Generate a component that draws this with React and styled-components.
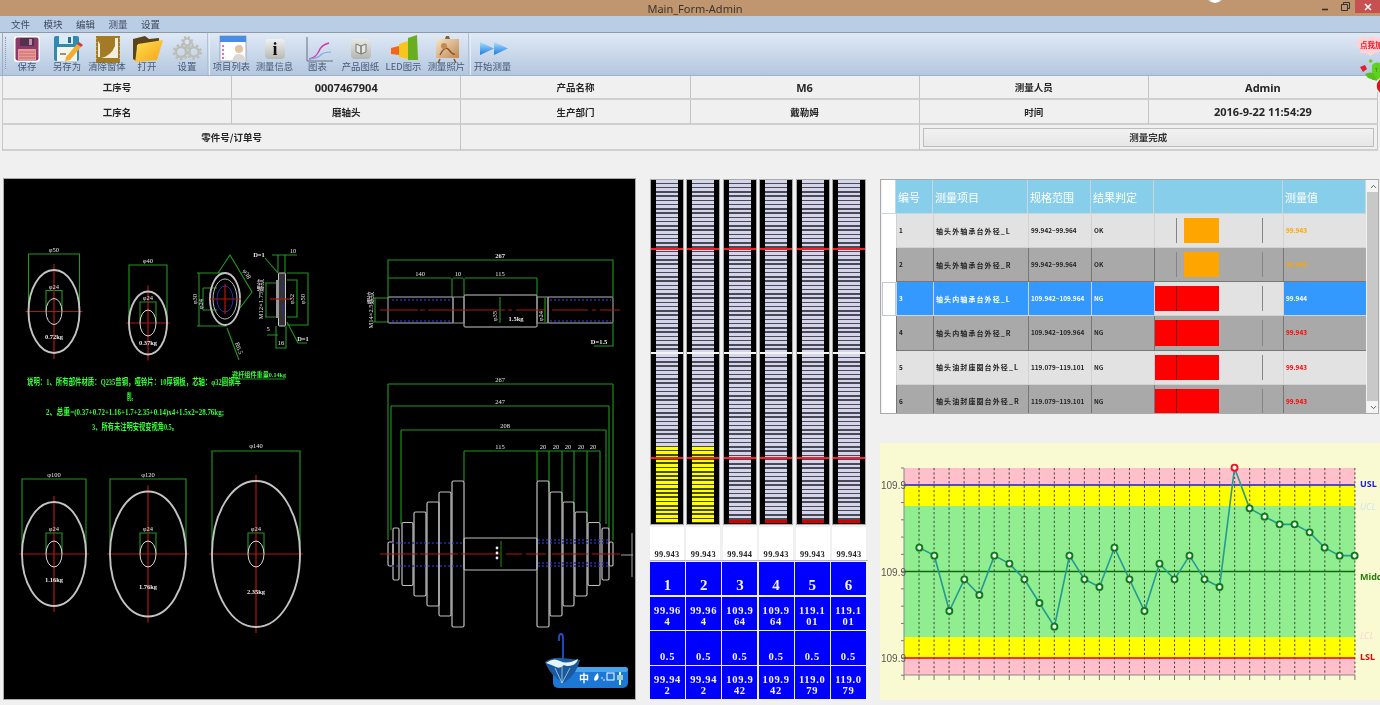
import React from "react";
import styled, { createGlobalStyle } from "styled-components";
import { ChevronUp, ChevronDown } from "lucide-react";

const Global = createGlobalStyle`
  html, body { margin: 0; padding: 0; background: #f0f0f0; overflow: hidden; }
  * { box-sizing: border-box; }
`;

const CJK = `"Noto Sans CJK SC", "Noto Sans", sans-serif`;

const Page = styled.div`
  position: relative;
  width: 1380px;
  height: 705px;
  overflow: hidden;
  display: flex;
  flex-direction: column;
  background: #f0f0f0;
  font-family: ${CJK};
  filter: blur(0.45px);
`;

/* ---------- window chrome ---------- */
const TitleBar = styled.div`
  position: relative;
  height: 16px;
  flex: none;
  background: #c09671;
  display: grid;
  grid-template-columns: 1fr auto 1fr;
  align-items: center;
`;
const TitleText = styled.div`
  grid-column: 2;
  padding-left: 10px;
  font: 11px "Noto Sans", sans-serif;
  color: #3a332c;
`;
const WindowButtons = styled.div`
  grid-column: 3;
  justify-self: end;
  align-self: start;
  display: flex;
`;
const WindowButton = styled.div`
  width: ${(p) => (p.$close ? 25 : 20)}px;
  height: 13px;
  background: ${(p) => (p.$close ? "#c75050" : "transparent")};
  display: flex;
  align-items: center;
  justify-content: center;
`;
const TitleOrb = styled.div`
  position: absolute;
  left: 1205px;
  top: -17px;
  width: 20px;
  height: 20px;
  border-radius: 50%;
  background: radial-gradient(circle at 50% 85%, #ffffff 0 15%, #3a9ad8 60%, #23608c 100%);
`;
const MenuBar = styled.div`
  height: 17px;
  flex: none;
  background: #b9cde5;
  border-bottom: 1px solid #8f99a6;
  display: flex;
  align-items: center;
  gap: 13.5px;
  padding-left: 11px;
`;
const MenuItem = styled.span`
  font-size: 9.5px;
  line-height: 16px;
  color: #3d4c60;
`;
const Toolbar = styled.div`
  height: 43px;
  flex: none;
  background: linear-gradient(to bottom, #dfe9f6, #b4c7de);
  border-bottom: 1px solid #a0b2c9;
  padding-left: 2px;
  display: flex;
`;
const Gripper = styled.div`
  width: 5px;
  height: 100%;
  border-left: 1px solid #a3adb9;
  margin-right: 0;
  position: relative;
  &::after {
    content: "";
    position: absolute;
    left: 2px;
    top: 4px;
    bottom: 6px;
    border-left: 1px dotted #8298b4;
  }
`;
const ToolGroup = styled.div`
  display: flex;
  height: 100%;
`;
const ToolSeparator = styled.div`
  width: 3px;
  height: 100%;
  border-left: 1px solid #b2c2d6;
  border-right: 1px solid #e4edf7;
`;
const Tool = styled.div`
  width: ${(p) => p.$w}px;
  height: 100%;
  padding-top: 2px;
  display: flex;
  flex-direction: column;
  align-items: center;
`;
const ToolIcon = styled.svg`
  width: 32px;
  height: 28px;
  display: block;
  flex: none;
`;
const ToolLabel = styled.span`
  margin-top: -3px;
  font-size: 9.4px;
  line-height: 12px;
  white-space: nowrap;
  color: #435a78;
`;
const Mascot = styled.svg`
  position: absolute;
  right: 0;
  top: 34px;
  width: 30px;
  height: 68px;
`;
const MascotText = styled.text`
  font: bold 7.5px ${CJK};
  fill: #e8202c;
`;

/* ---------- info grid ---------- */
const InfoGrid = styled.div`
  flex: none;
  height: 75px;
  margin: 0 2px;
  display: grid;
  grid-template-columns: repeat(6, 1fr);
  grid-template-rows: 24px 25px 26px;
  border-left: 1px solid #c8c8c8;
`;
const InfoCell = styled.div`
  grid-column: span ${(p) => p.$span || 1};
  border-right: 1px solid #c4c4c4;
  border-bottom: 2px solid #cfcfcf;
  display: flex;
  align-items: center;
  justify-content: center;
  font: bold ${(p) => (p.$latin ? "11px" : "9.5px")} ${(p) => (p.$latin ? `"Noto Sans", ${CJK}` : CJK)};
  color: #262626;
  padding: 2px;
`;
const DoneButton = styled.div`
  width: 100%;
  height: 19px;
  margin: 0 1px;
  border: 1px solid #bdbdbd;
  background: linear-gradient(to bottom, #f2f2f2, #e6e6e6);
  display: flex;
  align-items: center;
  justify-content: center;
  font: bold 9.5px ${CJK};
  color: #333;
`;

/* ---------- content ---------- */
const Content = styled.div`
  display: flex;
  margin-top: 27px;
  align-items: flex-start;
`;
const DrawingFrame = styled.div`
  width: 633px;
  height: 522px;
  margin-left: 3px;
  flex: none;
  background: #000;
  border: 1px solid #a8a8a8;
`;
const DrawingSvg = styled.svg`
  display: block;
  width: 631px;
  height: 520px;
  text {
    font-family: "Liberation Serif", ${CJK};
    font-size: 6.5px;
    fill: #e8e8e8;
    text-anchor: middle;
  }
`;
const NoteText = styled.text`
  && {
    font: bold 8.6px "Liberation Serif", ${CJK};
    fill: #39ff3a;
    text-anchor: start;
  }
`;
const SmallNoteText = styled(NoteText)`
  && {
    font-size: 6.4px;
  }
`;
const ImeGlyph = styled.text`
  && {
    font: bold 10px ${CJK};
    fill: #fff;
  }
`;

/* gauges */
const GaugeColumn = styled.div`
  width: 218px;
  margin: 1px 0 0 14px;
  flex: none;
  display: flex;
  flex-direction: column;
`;
const GaugeRow = styled.div`
  display: grid;
  grid-template-columns: repeat(6, 34px);
  column-gap: 2.4px;
  height: 346px;
`;
const Gauge = styled.div`
  position: relative;
  background: #000;
  border: 1px solid #a9a9a9;
  display: flex;
  justify-content: center;
  padding-bottom: 1px;
`;
const GaugeScale = styled.div`
  position: relative;
  width: 22px;
  background: repeating-linear-gradient(to bottom, #d4d4ea 0 2.6px, #4a4a56 2.6px 4.25px);
`;
const GaugeFill = styled.div`
  position: absolute;
  left: 0;
  right: 0;
  bottom: 0;
  height: ${(p) => p.$h}px;
  background: ${(p) =>
    p.$red
      ? "#d40000"
      : "repeating-linear-gradient(to bottom, #ffff00 0 2.6px, #4a4a0a 2.6px 4.25px)"};
`;
const GaugeLine = styled.div`
  position: absolute;
  left: 0;
  right: 0;
  top: ${(p) => p.$top}px;
  height: 2px;
  background: ${(p) => p.$color};
`;
const ValueRow = styled.div`
  display: grid;
  grid-template-columns: repeat(6, 34px);
  column-gap: 2.4px;
  height: 36px;
  padding-top: 2px;
  border-bottom: 1px solid #b0b0e8;
`;
const ValueCell = styled.div`
  background: #fff;
  display: flex;
  align-items: flex-end;
  justify-content: center;
  padding-bottom: 1px;
  font: bold 8.4px/9px "Liberation Serif", serif;
  letter-spacing: 0.35px;
  color: #222;
`;
const SpecGrid = styled.div`
  display: grid;
  grid-template-columns: repeat(6, 35px);
  grid-auto-rows: 33.4px;
  gap: 1.2px;
  margin-top: 1px;
`;
const SpecCell = styled.div`
  background: #0000ff;
  color: #f4f4ff;
  display: flex;
  align-items: flex-end;
  justify-content: center;
  text-align: center;
  padding: 0 3px ${(p) => (p.$big ? 1 : 3)}px;
  word-break: break-all;
  font: bold ${(p) => (p.$big ? "15px/18px" : "10.5px/11px")} "Liberation Serif", serif;
  letter-spacing: ${(p) => (p.$big ? 0 : 0.7)}px;
`;

/* right column */
const RightColumn = styled.div`
  width: 500px;
  margin: 1px 0 0 12px;
  flex: none;
  display: flex;
  flex-direction: column;
  gap: 29px;
`;
const TableFrame = styled.div`
  width: 499px;
  height: 235px;
  border: 1px solid #aaa;
  padding-left: 1px;
  display: flex;
  overflow: hidden;
  background: #f0f0f0;
`;
const TableBody = styled.div`
  width: 484px;
  flex: none;
  overflow: hidden;
`;
const columns = "14px 37px 95px 63px 63px 129px 83px";
const HeadRow = styled.div`
  display: grid;
  grid-template-columns: ${columns};
  height: 34px;
`;
const HeadCell = styled.div`
  background: ${(p) => (p.$blank ? "#fff" : "#87ceeb")};
  border-right: 1px solid #c9d6dc;
  border-bottom: 1px solid #c9d6dc;
  color: #fff;
  font-size: 11px;
  display: flex;
  align-items: center;
  padding-left: 2px;
`;
const toneBg = { light: "#e2e2e2", dark: "#a9a9a9", selected: "#3399ff" };
const Row = styled.div`
  display: grid;
  grid-template-columns: ${columns};
  height: 34.15px;
`;
const RowHead = styled.div`
  background: #fff;
  border: ${(p) => (p.$tone === "selected" ? "1px solid #c4c8d0" : "none")};
`;
const Cell = styled.div`
  background: ${(p) => toneBg[p.$tone]};
  border-left: 1px solid ${(p) => (p.$tone === "dark" ? "#777" : "#d2d2d2")};
  border-bottom: 1px solid ${(p) => (p.$tone === "dark" ? "#777" : "#d2d2d2")};
  color: ${(p) => p.$color || (p.$tone === "selected" ? "#fff" : "#222")};
  display: flex;
  align-items: center;
  padding-left: 2px;
  white-space: nowrap;
  font: bold ${(p) => (p.$name ? "7px" : "6.4px")} ${CJK};
  letter-spacing: ${(p) => (p.$name ? 1.1 : 0)}px;
`;
const BarCell = styled.div`
  position: relative;
  background: ${(p) => (p.$tone === "dark" ? "#a9a9a9" : "#e2e2e2")};
  border-left: 1px solid ${(p) => (p.$tone === "dark" ? "#777" : "#d2d2d2")};
  border-bottom: 1px solid ${(p) => (p.$tone === "dark" ? "#777" : "#d2d2d2")};
`;
const BarMark = styled.div`
  position: absolute;
  top: 4px;
  bottom: 4px;
  left: ${(p) => p.$x}px;
  width: 1px;
  background: ${(p) => (p.$over ? "#8a0000" : "#858585")};
  z-index: 1;
`;
const BarFill = styled.div`
  position: absolute;
  top: 4px;
  bottom: 4px;
  left: ${(p) => p.$x}px;
  width: ${(p) => p.$w}px;
  background: ${(p) => p.$color};
`;
const Scrollbar = styled.div`
  width: 12px;
  margin-left: 1px;
  flex: none;
  background: #c8c8c8;
  display: flex;
  flex-direction: column;
  justify-content: space-between;
`;
const ScrollButton = styled.div`
  height: 12px;
  background: #f4f4f4;
  display: flex;
  align-items: center;
  justify-content: center;
  color: #555;
`;
const ChartPanel = styled.div`
  width: 500px;
  height: 257px;
  background: #fafad2;
  overflow: hidden;
`;
const ChartSvg = styled.svg`
  display: block;
  width: 500px;
  height: 257px;
`;
const AxisText = styled.text`
  font: 10px "Liberation Sans", sans-serif;
  fill: #555;
`;
const LimitText = styled.text`
  font: bold 9px "Noto Sans", sans-serif;
  font-style: ${(p) => (p.$soft ? "italic" : "normal")};
  font-weight: ${(p) => (p.$soft ? 400 : 700)};
  fill: ${(p) => p.$color};
`;

/* ---------- icons ---------- */
const icons = {
  save: (
    <>
      <rect x="3" y="1" width="26" height="26" rx="3" fill="#fff" />
      <rect x="4.5" y="2.5" width="23" height="23" rx="2" fill="#8c3a6c" />
      <rect x="9" y="3" width="14" height="8" fill="#54324e" />
      <rect x="18" y="4" width="3" height="6" fill="#c090b0" />
      <rect x="7" y="14" width="18" height="11" fill="#ea9a94" />
      <path d="M8 17h16M8 20h16M8 23h16" stroke="#c46a70" />
    </>
  ),
  saveAs: (
    <>
      <rect x="3" y="1" width="25" height="25" rx="2" fill="#2f8bb0" />
      <rect x="8" y="1" width="14" height="8" fill="#d8ecf4" />
      <rect x="17" y="2" width="3" height="6" fill="#2f6a88" />
      <rect x="6" y="12" width="20" height="14" fill="#f4f4ea" />
      <polygon points="15,22 26,9 30,12 19,25 14,26" fill="#f4ac30" />
      <polygon points="26,9 28,7 32,10 30,12" fill="#d8383a" />
      <path d="M9 19h6" stroke="#333" strokeWidth="1" />
    </>
  ),
  clear: (
    <>
      <rect x="5" y="1" width="24" height="27" fill="#a37b25" />
      <path d="M24 3h3v20H10q10-2 14-12z" fill="#f4eee0" />
      <path d="M7 6v16h2V9z" fill="#f4eee0" />
      <path d="M5 3v24M29 3v24" stroke="#f0e4c0" strokeDasharray="1 3" />
    </>
  ),
  open: (
    <>
      <defs>
        <linearGradient id="folder" x1="0" y1="0" x2="1" y2="1">
          <stop offset="0" stopColor="#ffe050" />
          <stop offset="1" stopColor="#f6a414" />
        </linearGradient>
      </defs>
      <polygon points="2,4 14,1 18,4 28,3 28,7 6,10 5,26 2,24" fill="#5a4418" />
      <polygon points="7,9 32,5 26,25 4,27" fill="url(#folder)" />
    </>
  ),
  gears: (
    <>
      <g fill="none" stroke="#bdbdb8">
        <circle cx="10" cy="17" r="5" strokeWidth="2.4" />
        <circle cx="10" cy="17" r="7" strokeWidth="2.6" strokeDasharray="2.5 2.2" />
        <circle cx="23" cy="17" r="4.6" strokeWidth="2.4" />
        <circle cx="23" cy="17" r="6.6" strokeWidth="2.6" strokeDasharray="2.5 2.2" />
        <circle cx="16" cy="7" r="3.4" strokeWidth="2" />
        <circle cx="16" cy="7" r="5" strokeWidth="2.2" strokeDasharray="2 2" />
      </g>
    </>
  ),
  list: (
    <>
      <rect x="4" y="1" width="26" height="25" fill="#fff" stroke="#9aa8c0" />
      <rect x="4" y="1" width="26" height="6" fill="#4a8ce4" />
      <path d="M6 11h2M6 15h2M6 19h2M6 23h2" stroke="#e040b0" strokeWidth="1.6" />
      <circle cx="23" cy="14" r="4" fill="#e4c4a0" />
      <path d="M16 27q1-8 7-8t7 8z" fill="#d8d8d8" />
    </>
  ),
  info: (
    <>
      <defs>
        <linearGradient id="tile" x1="0" y1="0" x2="0" y2="1">
          <stop offset="0" stopColor="#f0f0ee" />
          <stop offset="1" stopColor="#b8b8b4" />
        </linearGradient>
      </defs>
      <rect x="6" y="4" width="20" height="20" rx="4" fill="url(#tile)" />
      <text x="16" y="20" textAnchor="middle" fontFamily="Liberation Serif, serif" fontWeight="bold" fontSize="18" fill="#111">i</text>
    </>
  ),
  chart: (
    <>
      <path d="M5 2v24h26" fill="none" stroke="#66707c" />
      <path d="M7 24c6-1 8-4 10-8 2-5 6-7 10-8" fill="none" stroke="#d43aa8" strokeWidth="1.5" />
      <path d="M7 24c6 0 10-2 13-5 3-2 6-2 9-2" fill="none" stroke="#80a8e8" strokeWidth="1.2" />
    </>
  ),
  drawing: (
    <>
      <defs>
        <linearGradient id="tile2" x1="0" y1="0" x2="0" y2="1">
          <stop offset="0" stopColor="#e8e8e4" />
          <stop offset="1" stopColor="#b4b4b0" />
        </linearGradient>
      </defs>
      <rect x="6" y="4" width="20" height="20" rx="4" fill="url(#tile2)" />
      <path d="M11 9l5 2v8l-5-2zM16 11l5-2v8l-5 2z" fill="#e6e6e2" stroke="#777" />
    </>
  ),
  led: (
    <>
      <polygon points="3,13 11,11 11,20 3,19" fill="#f0661e" />
      <polygon points="11,9 20,6 20,24 11,22" fill="#f8c420" />
      <polygon points="20,3 29,0 30,25 20,25" fill="#68ae1e" />
    </>
  ),
  photo: (
    <>
      <defs>
        <linearGradient id="paper" x1="0" y1="0" x2="1" y2="1">
          <stop offset="0" stopColor="#f4e4c8" />
          <stop offset="1" stopColor="#c08850" />
        </linearGradient>
      </defs>
      <path d="M15 1h3l1 3h-5z" fill="#8a6038" />
      <path d="M9 24l-2 4M23 24l2 4" stroke="#8a5a30" strokeWidth="1.6" />
      <rect x="5" y="4" width="23" height="19" fill="url(#paper)" />
      <path d="M9 20q5-10 9-5t6 4" fill="none" stroke="#8a5020" strokeWidth="1.4" />
      <circle cx="13" cy="11" r="3" fill="#c48a50" />
    </>
  ),
  play: (
    <>
      <defs>
        <linearGradient id="arrow" x1="0" y1="0" x2="0" y2="1">
          <stop offset="0" stopColor="#a8e0fa" />
          <stop offset="1" stopColor="#1c7ce0" />
        </linearGradient>
      </defs>
      <polygon points="3,7 17,13.5 3,20" fill="url(#arrow)" />
      <polygon points="17,7 31,13.5 17,20" fill="url(#arrow)" />
    </>
  ),
};

const toolGroups = [
  { w: 40, items: [["save", "保存"], ["saveAs", "另存为"], ["clear", "清除窗体"], ["open", "打开"], ["gears", "设置"]] },
  { w: 43, items: [["list", "项目列表"], ["info", "测量信息"], ["chart", "图表"], ["drawing", "产品图纸"], ["led", "LED图示"], ["photo", "测量照片"]] },
  { w: 43, items: [["play", "开始测量"]] },
];

/* ---------- CAD drawing (page coordinates in the viewBox) ---------- */
const Green = ({ d }) => <path d={d} fill="none" stroke="#1f9a1f" strokeWidth="1.1" />;
const Red = ({ d }) => <path d={d} fill="none" stroke="#b01616" strokeWidth="1.2" />;
const Blue = ({ d }) => <path d={d} fill="none" stroke="#2a2aa8" strokeWidth="1.5" strokeDasharray="2 2" />;
const Steel = (props) => <ellipse fill="none" stroke="#c4c4c4" strokeWidth="1.9" {...props} />;
const Plate = ({ x1, x2, h, cy = 554 }) => (
  <rect x={x1} y={cy - h} width={x2 - x1} height={h * 2} rx="1.5" fill="none" stroke="#c0c0c0" strokeWidth="1.2" />
);
const VText = ({ x, y, children }) => (
  <text x={x} y={y} transform={`rotate(-90 ${x} ${y})`}>{children}</text>
);
const Disc = ({ cx, cy, rx, ry, topY, label, weight, weightY, labelY, hole = 24 }) => (
  <g>
    <Green d={`M${cx - rx} ${cy}V${topY}H${cx + rx}V${cy}`} />
    <Green d={`M${cx - 8} ${cy}V${cy - 21}H${cx + 8}V${cy}`} />
    <Red d={`M${cx - rx - 3} ${cy}H${cx + rx + 3}M${cx} ${cy - ry - 6}V${cy + ry + 6}`} />
    <Steel cx={cx} cy={cy} rx={rx} ry={ry} />
    <ellipse cx={cx} cy={cy} rx="8" ry="13" fill="none" stroke="#d8d8d8" />
    <text x={cx} y={labelY}>{label}</text>
    <text x={cx} y={cy - 23}>{`φ${hole}`}</text>
    <text x={cx} y={weightY} fontWeight="bold">{weight}</text>
  </g>
);

const Drawing = () => (
  <DrawingSvg viewBox="4 179 631 520">
    <Disc cx={54} cy={311.5} rx={25.5} ry={41.5} topY={254} label="φ50" labelY={252} weight="0.72kg" weightY={339} />
    <Disc cx={148} cy={323} rx={19} ry={31.5} topY={265} label="φ40" labelY={263} weight="0.37kg" weightY={345} />

    {/* flange, front */}
    <Green d="M197 273H227M197 326H227M199 273V326M203 288H217M203 310H217M203 288V310M218 273L230 255L252 292L240 308M227 328L239 360" />
    <Steel cx={225} cy={299} rx={15} ry={26} />
    <ellipse cx={225} cy={299} rx={12} ry={20} fill="none" stroke="#bbb" />
    <ellipse cx={225} cy={299} rx={8} ry={13} fill="none" stroke="#2a2ab0" />
    <Red d="M210 299H241M225 284V314" />
    <VText x={197} y={299}>φ30</VText>
    <VText x={203} y={304}>φ24</VText>
    <text x={245} y={275} transform="rotate(60 245 275)">φ38</text>
    <text x={237} y={349} transform="rotate(68 237 349)">R6.5</text>

    {/* flange, side */}
    <Green d="M272 255H297M278 255V273M285 255V273M265 258L278 273M287 280H297V317H287M287 273H308V325H287M265 283H277M265 317H277M266 283V317M276 326V348H286V326M267 335H278M287 322L298 343H307" />
    <rect x="278.5" y="273" width="7" height="53" rx="1" fill="#333" stroke="#c8c8c8" />
    <rect x="276" y="280" width="3" height="38" fill="#999" />
    <path d="M283 281V292M283 305V316" stroke="#2a2ab0" strokeWidth="1.4" strokeDasharray="2 2" />
    <Red d="M270 299H291" />
    <text x={293} y={253}>10</text>
    <text x={259} y={257} fontWeight="bold">D=1</text>
    <text x={303} y={341} fontWeight="bold">D=1</text>
    <VText x={263} y={299}>M12×1.75螺纹</VText>
    <VText x={294} y={299}>φ32</VText>
    <VText x={305} y={299}>φ50</VText>
    <text x={268} y={331}>5</text>
    <text x={281} y={345}>16</text>

    {/* notes */}
    <NoteText x={27} y={385} textLength={214} lengthAdjust="spacingAndGlyphs">说明：1、所有部件材质：Q235普钢，哑铃片：10厚钢板，芯轴：φ32圆钢车</NoteText>
    <NoteText x={127} y={400} textLength={9} lengthAdjust="spacingAndGlyphs">削。</NoteText>
    <NoteText x={46} y={415} textLength={178} lengthAdjust="spacingAndGlyphs">2、总重=(0.37+0.72+1.16+1.7+2.35+0.14)x4+1.5x2=28.76kg;</NoteText>
    <NoteText x={92} y={430} textLength={86} lengthAdjust="spacingAndGlyphs">3、所有未注明安视变视角0.5。</NoteText>
    <SmallNoteText x={232} y={377} textLength={54} lengthAdjust="spacingAndGlyphs">避杆组件重量0.14kg</SmallNoteText>
    <Green d="M232 379H285" />

    {/* shaft */}
    <Green d="M388 297V260H613V297M388 278H451M453 278H463M465 278H537M452 278V297M464 278V295M537 278V295M373 298H388M373 322H388M375 298V322M500 297V323M545 298V322" />
    <rect x="388" y="297" width="65" height="26" rx="1" fill="none" stroke="#b8b8b8" />
    <rect x="464" y="295" width="73" height="32" rx="1" fill="none" stroke="#c8c8c8" />
    <rect x="453" y="297" width="11" height="26" fill="none" stroke="#999" />
    <rect x="537" y="297" width="11" height="26" fill="none" stroke="#999" />
    <rect x="548" y="297" width="65" height="26" rx="1" fill="none" stroke="#b8b8b8" />
    <Blue d="M392 300H450M392 321H450M550 300H611M550 321H611" />
    <Red d="M380 310H418M420 310H425M428 310H505M508 310H512M516 310H546M552 310H588M592 310H596M600 310H620" />
    <text x={500} y={258} fontWeight="bold">267</text>
    <text x={420} y={276}>140</text>
    <text x={458} y={276}>10</text>
    <text x={500} y={276}>115</text>
    <VText x={497} y={316}>φ35</VText>
    <VText x={543} y={316}>φ24</VText>
    <text x={516} y={321} fontWeight="bold">1.5kg</text>
    <VText x={373} y={310}>M14×2.5螺纹</VText>
    <Green d="M613 323V346H594" />
    <text x={599} y={344} fontWeight="bold">D=1.5</text>

    {/* dumbbell */}
    <Green d="M388 384H613M388 384V540M613 384V540M391 406H609M391 406V530M609 406V530M401 430H606M401 430V524M606 430V524M464 451H600M464 451V481M537 451V481M549 451V492M562 451V502M574 451V512M587 451V522M600 451V522" />
    <text x={500} y={382}>267</text>
    <text x={500} y={404}>247</text>
    <text x={505} y={428}>208</text>
    <text x={500} y={449}>115</text>
    <text x={543} y={449}>20</text>
    <text x={556} y={449}>20</text>
    <text x={568} y={449}>20</text>
    <text x={581} y={449}>20</text>
    <text x={593} y={449}>20</text>
    <Plate x1={452} x2={464} h={73} />
    <Plate x1={439} x2={451} h={62} />
    <Plate x1={427} x2={439} h={52} />
    <Plate x1={414} x2={426} h={42} />
    <Plate x1={402} x2={413} h={31.5} />
    <Plate x1={393} x2={399} h={26} />
    <Plate x1={388} x2={393} h={12} />
    <Plate x1={537} x2={549} h={73} />
    <Plate x1={550} x2={562} h={62} />
    <Plate x1={563} x2={574} h={52} />
    <Plate x1={575} x2={587} h={42} />
    <Plate x1={588} x2={600} h={31.5} />
    <Plate x1={602} x2={609} h={26} />
    <Plate x1={609} x2={613} h={12} />
    <Plate x1={464} x2={537} h={16} />
    <Blue d="M392 543H463M392 566H463M538 543H610M538 566H610M538 540H610M538 563H610" />
    <Red d="M380 554H418M420 554H458M461 554H500M506 554H522M526 554H546M552 554H588M592 554H620" />
    <path d="M501 541V567" stroke="#1f8a1f" />
    <path d="M621 555H633M632 533V577" stroke="#aaa" />
    <circle cx="497" cy="548" r="1.4" fill="#eee" />
    <circle cx="497" cy="553" r="1.4" fill="#eee" />
    <circle cx="497" cy="558" r="1.4" fill="#eee" />

    <Disc cx={54} cy={554} rx={32} ry={52} topY={479} label="φ100" labelY={477} weight="1.16kg" weightY={582} />
    <Disc cx={148} cy={554} rx={38} ry={62.5} topY={479} label="φ120" labelY={477} weight="1.76kg" weightY={589} />
    <Disc cx={256} cy={554} rx={44} ry={73} topY={451} label="φ140" labelY={448} weight="2.35kg" weightY={594} />

    {/* floating input method bar */}
    <rect x="553" y="667" width="75" height="21" rx="5" fill="#1c78d4" />
    <rect x="553" y="667" width="75" height="5" rx="2.5" fill="#4aa4ec" />
    <path d="M563 666V638q0-4-2-4t-2 4v3" fill="none" stroke="#2050d0" strokeWidth="1.8" />
    <path d="M545 662q8-5 17-4t18 2q-3 14-16 23q-14-7-19-21z" fill="#1a5a9c" />
    <path d="M546 663q7-6 14-2t18-2q-1 4-5 6q-6 2-9 0q-4 4-8 2t-10-4z" fill="#e8f4fb" />
    <path d="M562 664L562 683M555 668L562 683M570 668L562 683" stroke="#bfe2f8" strokeWidth="0.7" />
    <ImeGlyph x={584} y={682}>中</ImeGlyph>
    <path d="M594 680q0-4 4-7q1 4 0 6q-2 3-4 1z" fill="#fff" />
    <circle cx="602" cy="678" r="0.8" fill="#fff" />
    <circle cx="604" cy="680" r="0.8" fill="#fff" />
    <rect x="607" y="673" width="7" height="7" fill="none" stroke="#fff" />
    <path d="M619 672h2v13h-2z" fill="#dfe" />
    <path d="M617 675h6v5h-6z" fill="#9cc" />
  </DrawingSvg>
);

/* ---------- gauges data ---------- */
const gauges = [
  { v: "99.943", fill: 76, n: "1", hi: "99.964", tol: "0.5", lo: "99.942" },
  { v: "99.943", fill: 76, n: "2", hi: "99.964", tol: "0.5", lo: "99.942" },
  { v: "99.944", red: 3, n: "3", hi: "109.964", tol: "0.5", lo: "109.942" },
  { v: "99.943", red: 3, n: "4", hi: "109.964", tol: "0.5", lo: "109.942" },
  { v: "99.943", red: 3, n: "5", hi: "119.101", tol: "0.5", lo: "119.079" },
  { v: "99.943", red: 3, n: "6", hi: "119.101", tol: "0.5", lo: "119.079" },
];

/* ---------- table data ---------- */
const AMBER = "#ffa500";
const RED = "#ff0000";
const rows = [
  { id: 1, name: "轴头外轴承台外径_L", spec: "99.942~99.964", res: "OK", tone: "light", color: AMBER, val: "99.943" },
  { id: 2, name: "轴头外轴承台外径_R", spec: "99.942~99.964", res: "OK", tone: "dark", color: AMBER, val: "99.943" },
  { id: 3, name: "轴头内轴承台外径_L", spec: "109.942~109.964", res: "NG", tone: "selected", color: RED, val: "99.944" },
  { id: 4, name: "轴头内轴承台外径_R", spec: "109.942~109.964", res: "NG", tone: "dark", color: RED, val: "99.943" },
  { id: 5, name: "轴头油封座圈台外径_L", spec: "119.079~119.101", res: "NG", tone: "light", color: RED, val: "99.943" },
  { id: 6, name: "轴头油封座圈台外径_R", spec: "119.079~119.101", res: "NG", tone: "dark", color: RED, val: "99.943" },
];

/* ---------- chart ---------- */
const pts = [323,347,513,418,465,347,371,418,489,560,347,418,441,323,418,513,371,418,347,418,441,83,205,230,253,253,277,323,347,347]
  .map((py, i) => ({ x: 875 + (133 + i * 45.03) / 3, y: 440 + py / 3, i }));
const gridX = Array.from({ length: 31 }, (_, i) => 904 + i * 15.03);
const gridY = Array.from({ length: 13 }, (_, i) => 468 + i * 17.27);

const Chart = () => (
  <ChartSvg viewBox="880 443 500 257">
    <rect x="904" y="468" width="451" height="17" fill="#ffc0cb" />
    <rect x="904" y="485" width="451" height="21" fill="#ffff00" />
    <rect x="904" y="506" width="451" height="131" fill="#90ee90" />
    <rect x="904" y="637" width="451" height="21" fill="#ffff00" />
    <rect x="904" y="658" width="451" height="17" fill="#ffc0cb" />
    {gridX.map((x, i) => (
      <g key={x}>
        {i > 0 && <path d={`M${x} 468V675`} stroke="#333" strokeWidth="0.9" strokeDasharray="2.2 2.2" />}
        <path d={`M${x} 675V680`} stroke="#777" />
      </g>
    ))}
    {gridY.map((y) => (
      <path key={y} d={`M901 ${y}H904`} stroke="#777" />
    ))}
    <path d="M904 468V675H1355" fill="none" stroke="#888" />
    <path d="M904 485H1355" stroke="#1a1ae8" strokeWidth="1.7" />
    <path d="M904 571.5H1355" stroke="#0a6a0a" strokeWidth="1.7" />
    <path d="M904 658H1355" stroke="#f00000" strokeWidth="1.7" />
    <polyline
      points={pts.map((p) => `${p.x},${p.y}`).join(" ")}
      fill="none"
      stroke="#249a92"
      strokeWidth="1.6"
    />
    {pts.map((p) => (
      <circle
        key={p.i}
        cx={p.x}
        cy={p.y}
        r="3"
        fill="#f4fff4"
        stroke={p.i === 21 ? "#f01020" : "#0d7a1a"}
        strokeWidth="1.9"
      />
    ))}
    <AxisText x="881" y="489">109.9</AxisText>
    <AxisText x="881" y="575.5">109.9</AxisText>
    <AxisText x="881" y="662">109.9</AxisText>
    <LimitText x="1360" y="487" $color="#1a1ae8">USL</LimitText>
    <LimitText x="1360" y="510" $color="#cfe6e6" $soft>UCL</LimitText>
    <LimitText x="1360" y="580" $color="#2c7a10">Middle</LimitText>
    <LimitText x="1360" y="639" $color="#ffd4d8" $soft>LCL</LimitText>
    <LimitText x="1360" y="660" $color="#f00000">LSL</LimitText>
  </ChartSvg>
);

export default function App() {
  return (
    <Page>
      <Global />
      <TitleBar>
        <TitleOrb />
        <TitleText>Main_Form-Admin</TitleText>
        <WindowButtons>
          <WindowButton>
            <svg width="8" height="8" viewBox="0 0 8 8"><path d="M1 6.5H7" stroke="#333" strokeWidth="1.6" /></svg>
          </WindowButton>
          <WindowButton>
            <svg width="9" height="9" viewBox="0 0 9 9"><path d="M0.5 2.5H6.5V8.5H0.5zM2.5 2.5V0.5H8.5V6.5H6.5" fill="none" stroke="#333" /></svg>
          </WindowButton>
          <WindowButton $close>
            <svg width="8" height="8" viewBox="0 0 8 8"><path d="M1 1L7 7M7 1L1 7" stroke="#fff" strokeWidth="1.5" /></svg>
          </WindowButton>
        </WindowButtons>
      </TitleBar>

      <MenuBar>
        {["文件", "模块", "编辑", "测量", "设置"].map((m) => (
          <MenuItem key={m}>{m}</MenuItem>
        ))}
      </MenuBar>

      <Toolbar>
        <Gripper />
        {toolGroups.map((g, gi) => (
          <React.Fragment key={gi}>
            {gi > 0 && <ToolSeparator />}
            <ToolGroup>
              {g.items.map(([icon, label]) => (
                <Tool key={label} $w={g.w}>
                  <ToolIcon viewBox="0 0 32 28">{icons[icon]}</ToolIcon>
                  <ToolLabel>{label}</ToolLabel>
                </Tool>
              ))}
            </ToolGroup>
          </React.Fragment>
        ))}
      </Toolbar>

      <InfoGrid>
        <InfoCell>工序号</InfoCell>
        <InfoCell $latin>0007467904</InfoCell>
        <InfoCell>产品名称</InfoCell>
        <InfoCell $latin>M6</InfoCell>
        <InfoCell>测量人员</InfoCell>
        <InfoCell $latin>Admin</InfoCell>
        <InfoCell>工序名</InfoCell>
        <InfoCell>磨轴头</InfoCell>
        <InfoCell>生产部门</InfoCell>
        <InfoCell>戴勒姆</InfoCell>
        <InfoCell>时间</InfoCell>
        <InfoCell $latin>2016-9-22 11:54:29</InfoCell>
        <InfoCell $span={2}>零件号/订单号</InfoCell>
        <InfoCell $span={2} />
        <InfoCell $span={2}>
          <DoneButton>测量完成</DoneButton>
        </InfoCell>
      </InfoGrid>

      <Content>
        <DrawingFrame>
          <Drawing />
        </DrawingFrame>

        <GaugeColumn>
          <GaugeRow>
            {gauges.map((g) => (
              <Gauge key={g.n}>
                <GaugeScale>
                  {g.fill && <GaugeFill $h={g.fill} />}
                  {g.red && <GaugeFill $h={g.red} $red />}
                </GaugeScale>
                <GaugeLine $top={68} $color="#ff1a2a" />
                <GaugeLine $top={172} $color="#f4f4f4" />
                <GaugeLine $top={277} $color="#ff1a2a" />
              </Gauge>
            ))}
          </GaugeRow>
          <ValueRow>
            {gauges.map((g) => (
              <ValueCell key={g.n}>{g.v}</ValueCell>
            ))}
          </ValueRow>
          <SpecGrid>
            {gauges.map((g) => <SpecCell key={g.n} $big>{g.n}</SpecCell>)}
            {gauges.map((g) => <SpecCell key={g.n}>{g.hi}</SpecCell>)}
            {gauges.map((g) => <SpecCell key={g.n}>{g.tol}</SpecCell>)}
            {gauges.map((g) => <SpecCell key={g.n}>{g.lo}</SpecCell>)}
          </SpecGrid>
        </GaugeColumn>

        <RightColumn>
          <TableFrame>
            <TableBody>
              <HeadRow>
                <HeadCell $blank />
                <HeadCell>编号</HeadCell>
                <HeadCell>测量项目</HeadCell>
                <HeadCell>规格范围</HeadCell>
                <HeadCell>结果判定</HeadCell>
                <HeadCell />
                <HeadCell>测量值</HeadCell>
              </HeadRow>
              {rows.map((r) => (
                <Row key={r.id}>
                  <RowHead $tone={r.tone} />
                  <Cell $tone={r.tone}>{r.id}</Cell>
                  <Cell $tone={r.tone} $name>{r.name}</Cell>
                  <Cell $tone={r.tone}>{r.spec}</Cell>
                  <Cell $tone={r.tone}>{r.res}</Cell>
                  <BarCell $tone={r.tone}>
                    {r.color === AMBER ? (
                      <BarFill $x={29} $w={35} $color={AMBER} />
                    ) : (
                      <BarFill $x={0} $w={64} $color={RED} />
                    )}
                    <BarMark $x={21} $over={r.color === RED} />
                    <BarMark $x={107} />
                  </BarCell>
                  <Cell $tone={r.tone} $color={r.tone === "selected" ? "#fff" : r.color}>{r.val}</Cell>
                </Row>
              ))}
            </TableBody>
            <Scrollbar>
              <ScrollButton><ChevronUp size={9} strokeWidth={2.5} /></ScrollButton>
              <ScrollButton><ChevronDown size={9} strokeWidth={2.5} /></ScrollButton>
            </Scrollbar>
          </TableFrame>
          <ChartPanel>
            <Chart />
          </ChartPanel>
        </RightColumn>
      </Content>

      <Mascot viewBox="0 0 30 68">
        <polygon points="5,6 10,5 13,2 17,5 22,2 30,4 30,18 25,19 20,22 16,19 11,19 9,14 6,12 8,9" fill="#ffd2d6" />
        <MascotText x="10" y="14">点我加</MascotText>
        <path d="M22 31a8 8 0 0 1 8-2v17h-8z" fill="#62d020" />
        <circle cx="20.7" cy="27" r="1.8" fill="#62d020" />
        <text x="25" y="38" fontSize="5" fill="#2a7a10">7</text>
        <path d="M15 40q6-3 9 0l3 7q-6-2-9-3z" fill="#56c01c" />
        <polygon points="10,33 15,31 17,35 13,38" fill="#e0202a" />
        <circle cx="35" cy="52" r="9" fill="#d81818" stroke="#f4f4f4" strokeWidth="1.4" />
      </Mascot>
    </Page>
  );
}
